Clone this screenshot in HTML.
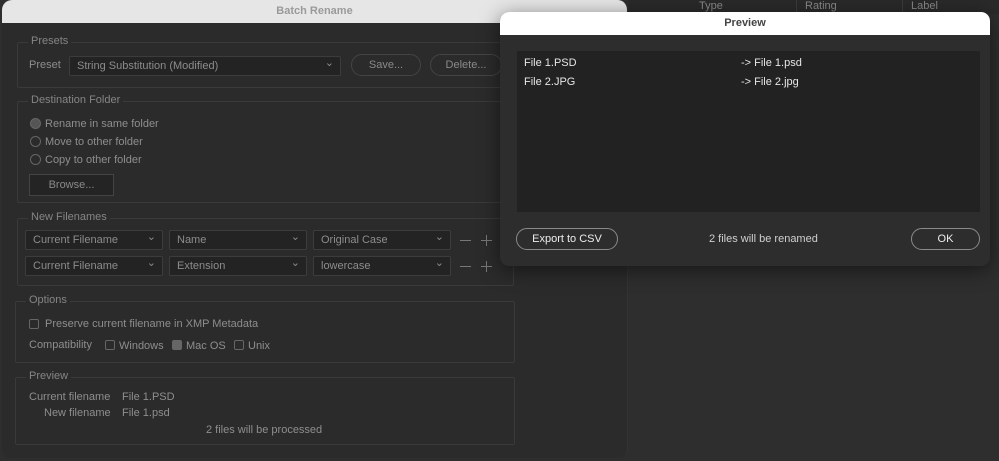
<!DOCTYPE html>
<html><head><meta charset="utf-8"><style>
*{box-sizing:border-box;margin:0;padding:0}
body{width:999px;height:461px;overflow:hidden;background:#2e2e2e;font-family:"Liberation Sans",sans-serif;font-size:11px;position:relative;color:#8c8c8c}
.abs{position:absolute}
.col{position:absolute;top:-1px;font-size:11px;color:#8a8a8a;line-height:14px}
.sep{position:absolute;top:0;width:1px;height:14px;background:#3c3c3c}
#br{left:2px;top:0;width:626px;height:458px;background:#2b2b2b;border-radius:10px 10px 8px 8px;overflow:hidden;border-right:1px solid #333}
#brt{height:23px;background:#e6e6e6;color:#9a9a9a;font-weight:bold;text-align:center;line-height:23px;font-size:11px}
fieldset{position:absolute;border:1px solid #3a3a3a;border-radius:2px}
.lg{position:absolute;top:-8px;left:10px;background:#2b2b2b;padding:0 3px;font-size:11px;color:#858585}
.t{position:absolute;white-space:nowrap;color:#8e8e8e}
.sel{position:absolute;height:20px;background:#232323;border:1px solid #3c3c3c;border-radius:2px;color:#8c8c8c;padding-left:7px;line-height:18px}
.sel:after{content:"⌄";position:absolute;right:6px;top:-3px;font-size:11px}
.btn{position:absolute;border:1px solid #444;border-radius:11px;text-align:center;color:#8a8a8a}
.rad{position:absolute;width:11px;height:11px;border:1px solid #666;border-radius:50%}
.cb{position:absolute;width:10px;height:10px;border:1px solid #666;border-radius:2px}
.mn{position:absolute;width:11px;height:1px;background:#777}
.pl{position:absolute;width:11px;height:11px}
.pl:before{content:"";position:absolute;left:0;top:5px;width:11px;height:1px;background:#777}
.pl:after{content:"";position:absolute;left:5px;top:0;width:1px;height:11px;background:#777}
#pv{left:500px;top:12px;width:490px;height:254px;background:#2d2d2d;border-radius:9px;overflow:hidden;box-shadow:0 4px 20px rgba(0,0,0,.5)}
#pvt{height:23px;background:#fff;text-align:center;line-height:22px;font-weight:bold;color:#444;font-size:11px}
#lst{position:absolute;left:17px;top:39px;width:463px;height:161px;background:#222}
.w{position:absolute;color:#e6e6e6;font-size:11px;white-space:nowrap}
.wb{position:absolute;border:1px solid #8a8a8a;border-radius:11px;color:#eee;text-align:center;line-height:20px;height:22px}
</style></head><body>
<div class="abs" style="left:628px;top:0;width:371px;height:14px;background:#2a2a2a"></div>
<div class="col" style="left:699px">Type</div>
<div class="col" style="left:805px">Rating</div>
<div class="col" style="left:911px">Label</div>
<div class="sep" style="left:796px"></div>
<div class="sep" style="left:902px"></div>

<div id="br" class="abs">
<div id="brt">Batch Rename</div>
<fieldset style="left:15px;top:42px;width:500px;height:46px"><div class="lg">Presets</div></fieldset>
<div class="t" style="left:27px;top:59px">Preset</div>
<div class="sel" style="left:67px;top:56px;width:272px">String Substitution (Modified)</div>
<div class="btn" style="left:349px;top:54px;width:70px;height:22px;line-height:20px">Save...</div>
<div class="btn" style="left:428px;top:54px;width:72px;height:22px;line-height:20px">Delete...</div>

<fieldset style="left:15px;top:101px;width:500px;height:102px"><div class="lg">Destination Folder</div></fieldset>
<div class="rad" style="left:28px;top:118px;background:#555"></div>
<div class="t" style="left:43px;top:118px">Rename in same folder</div>
<div class="rad" style="left:28px;top:136px"></div>
<div class="t" style="left:43px;top:136px">Move to other folder</div>
<div class="rad" style="left:28px;top:154px"></div>
<div class="t" style="left:43px;top:154px">Copy to other folder</div>
<div class="abs" style="left:27px;top:174px;width:85px;height:22px;border:1px solid #444;background:#242424;text-align:center;line-height:20px;color:#8a8a8a">Browse...</div>

<fieldset style="left:15px;top:218px;width:497px;height:68px"><div class="lg">New Filenames</div></fieldset>
<div class="sel" style="left:23px;top:230px;width:138px">Current Filename</div>
<div class="sel" style="left:167px;top:230px;width:138px">Name</div>
<div class="sel" style="left:311px;top:230px;width:138px">Original Case</div>
<div class="mn" style="left:458px;top:240px"></div><div class="pl" style="left:479px;top:235px"></div>
<div class="sel" style="left:23px;top:256px;width:138px">Current Filename</div>
<div class="sel" style="left:167px;top:256px;width:138px">Extension</div>
<div class="sel" style="left:311px;top:256px;width:138px">lowercase</div>
<div class="mn" style="left:458px;top:266px"></div><div class="pl" style="left:479px;top:261px"></div>

<fieldset style="left:13px;top:301px;width:406px;height:62px;width:406px"></fieldset>
<fieldset style="left:13px;top:301px;height:62px;width:406px;width:406px;display:none"></fieldset>
<fieldset style="left:13px;top:301px;height:62px;width:406px" hidden></fieldset>
<fieldset style="left:13px;top:301px;height:62px;width:406px;visibility:hidden"></fieldset>
<div class="abs" style="left:13px;top:301px;width:406px;height:62px;border:1px solid #3a3a3a;border-radius:2px;display:none"></div>
<div class="abs" style="left:13px;top:301px;width:406px;height:62px;display:none"></div>
<style>#br fieldset[style*="top:301px"]{display:none}</style>
<div class="abs" style="left:13px;top:301px;width:500px;height:62px;border:1px solid #3a3a3a;border-radius:2px"><div class="lg">Options</div></div>
<div class="cb" style="left:27px;top:319px"></div>
<div class="t" style="left:43px;top:318px">Preserve current filename in XMP Metadata</div>
<div class="t" style="left:27px;top:339px">Compatibility</div>
<div class="cb" style="left:103px;top:340px"></div><div class="t" style="left:117px;top:340px">Windows</div>
<div class="cb" style="left:170px;top:340px;background:#666"></div><div class="t" style="left:184px;top:340px">Mac OS</div>
<div class="cb" style="left:232px;top:340px"></div><div class="t" style="left:246px;top:340px">Unix</div>
<div class="abs" style="left:13px;top:377px;width:500px;height:68px;border:1px solid #3a3a3a;border-radius:2px"><div class="lg">Preview</div></div>
<div class="t" style="left:27px;top:391px">Current filename</div>
<div class="t" style="left:120px;top:391px">File 1.PSD</div>
<div class="t" style="left:42px;top:407px">New filename</div>
<div class="t" style="left:120px;top:407px">File 1.psd</div>
<div class="t" style="left:204px;top:424px">2 files will be processed</div>
</div>

<div id="pv" class="abs">
<div id="pvt">Preview</div>
<div id="lst">
<div class="w" style="left:7px;top:6px">File 1.PSD</div>
<div class="w" style="left:224px;top:6px">-&gt; File 1.psd</div>
<div class="w" style="left:7px;top:25px">File 2.JPG</div>
<div class="w" style="left:224px;top:25px">-&gt; File 2.jpg</div>
</div>
<div class="wb" style="left:16px;top:216px;width:102px">Export to CSV</div>
<div class="w" style="left:209px;top:221px;color:#cfcfcf">2 files will be renamed</div>
<div class="wb" style="left:411px;top:216px;width:69px">OK</div>
</div>
</body></html>
